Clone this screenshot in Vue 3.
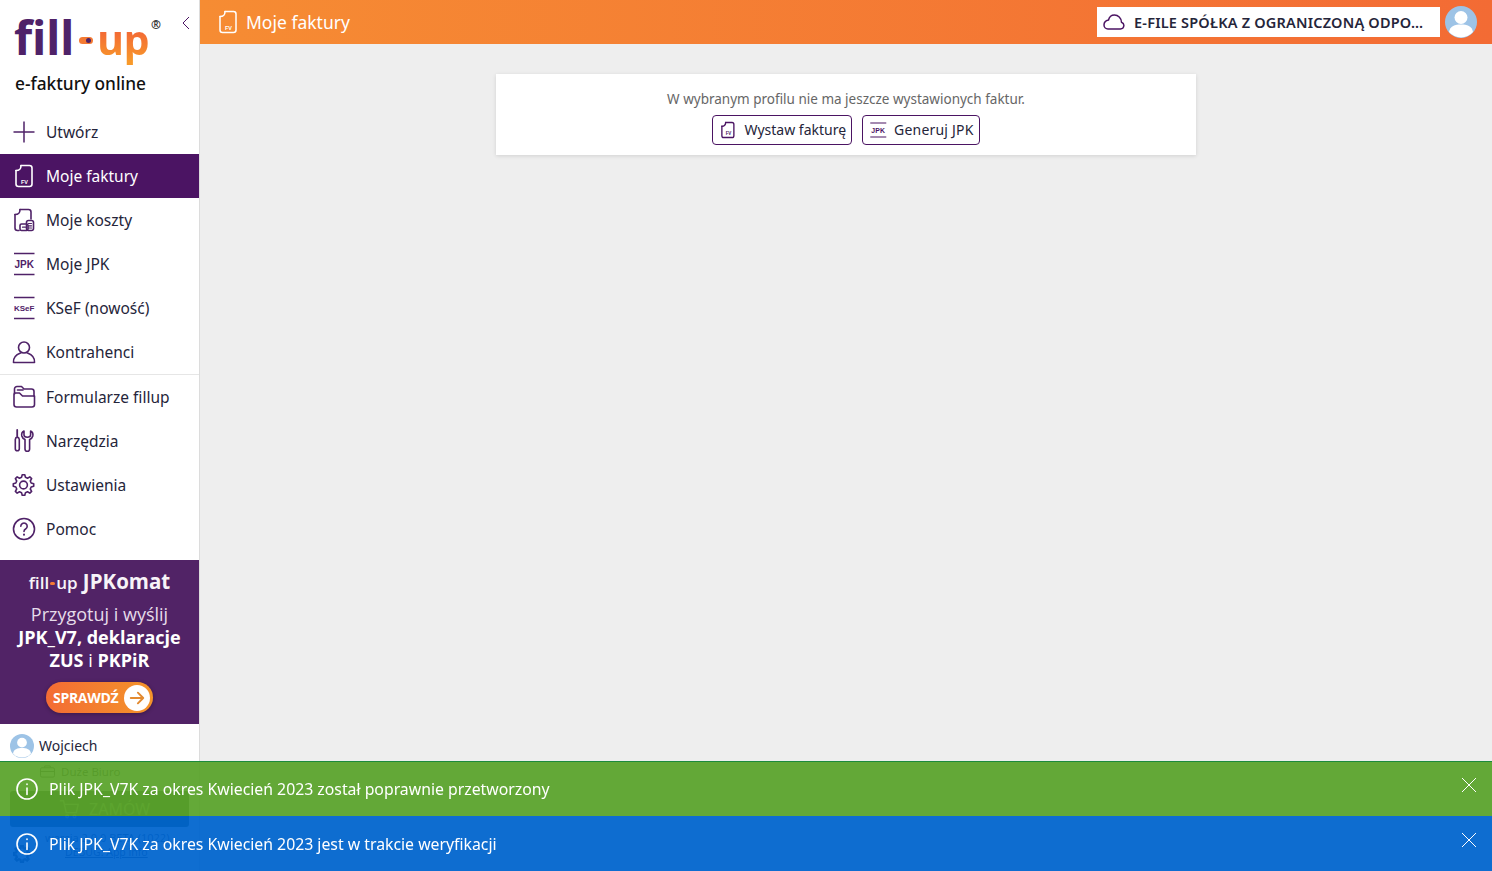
<script setup>
const navTop = [
  { label: 'Utwórz', icon: 'plus' },
  { label: 'Moje faktury', icon: 'doc', active: true },
  { label: 'Moje koszty', icon: 'cost' },
  { label: 'Moje JPK', icon: 'jpk' },
  { label: 'KSeF (nowość)', icon: 'ksef' },
  { label: 'Kontrahenci', icon: 'user' },
]
const navBottom = [
  { label: 'Formularze fillup', icon: 'folder' },
  { label: 'Narzędzia', icon: 'tools' },
  { label: 'Ustawienia', icon: 'gear' },
  { label: 'Pomoc', icon: 'help' },
]
const notices = [
  { text: 'Plik JPK_V7K za okres Kwiecień 2023 został poprawnie przetworzony', kind: 'green' },
  { text: 'Plik JPK_V7K za okres Kwiecień 2023 jest w trakcie weryfikacji', kind: 'blue' },
]

function gearPath(cx, cy, outer, inner, teeth) {
  const pts = []
  const step = (Math.PI * 2) / teeth
  for (let i = 0; i < teeth; i++) {
    const a = i * step - Math.PI / 2
    const spots = [
      [inner, a - step * 0.32],
      [outer, a - step * 0.16],
      [outer, a + step * 0.16],
      [inner, a + step * 0.32],
    ]
    for (const [r, t] of spots) {
      pts.push(`${(cx + r * Math.cos(t)).toFixed(2)} ${(cy + r * Math.sin(t)).toFixed(2)}`)
    }
  }
  return 'M' + pts.join('L') + 'Z'
}
const gear = gearPath(11.5, 12, 10.3, 7.9, 8)
const smallGear = gearPath(12, 12, 11, 8, 8)
</script>

<template>
  <div class="app">
    <aside class="sidebar">
      <div class="brand">
        <div class="logo">
          <span class="logo-fill">fill</span>
          <span class="logo-dash"><i></i></span>
          <span class="logo-up">up</span>
          <span class="logo-reg">®</span>
        </div>
        <svg class="collapse" width="8" height="14" viewBox="0 0 8 14"><path d="M7 1 1 7l6 6" fill="none" stroke="#4b1463" stroke-width="1"/></svg>
        <div class="tagline">e-faktury online</div>
      </div>

      <nav class="nav nav-top">
        <a v-for="item in navTop" :key="item.label" class="nav-item" :class="{ active: item.active }">
          <span class="nav-icon">
            <svg width="24" height="24" viewBox="0 0 24 24" fill="none" stroke="currentColor" stroke-width="1.6" stroke-linecap="round" stroke-linejoin="round">
              <template v-if="item.icon === 'plus'">
                <path d="M12 1.500v21M1.500 12h21" stroke-linecap="butt" stroke-width="1.500"/>
              </template>
              <template v-else-if="item.icon === 'doc'">
                <path d="M9 1.500h8.500A2.500 2.500 0 0 1 20 4v16a2.500 2.500 0 0 1-2.500 2.500h-11A2.500 2.500 0 0 1 4 20V6.500"/>
                <path d="M4 6.500c2.800 0 5-.5 5-5"/>
                <text x="9" y="19.500" class="mini" font-size="5.500" fill="currentColor" stroke="none">FV</text>
              </template>
              <template v-else-if="item.icon === 'cost'">
                <path d="M8 1.500h8.500A2.500 2.500 0 0 1 19 4v7"/>
                <path d="M3 6.500v13.500a2.500 2.500 0 0 0 2.500 2.500H7"/>
                <path d="M3 6.500c2.800 0 5-.5 5-5"/>
                <rect x="8" y="16" width="8" height="6.500" rx="1.500"/>
                <rect x="14.500" y="12.500" width="7" height="10" rx="2"/>
                <path d="M10.500 19.200h3M16.500 15.500h3M16.500 17.800h3M16.500 20h3" stroke-width="1.200"/>
              </template>
              <template v-else-if="item.icon === 'jpk' || item.icon === 'ksef'">
                <path d="M2 1.500h20.500M2 22.500h20.500" stroke-linecap="butt" stroke-width="1.400"/>
                <text x="12.200" :y="item.icon === 'jpk' ? 15.500 : 15" text-anchor="middle" class="mini" :font-size="item.icon === 'jpk' ? 10 : 8" fill="currentColor" stroke="none">{{ item.icon === 'jpk' ? 'JPK' : 'KSeF' }}</text>
              </template>
              <template v-else>
                <circle cx="12" cy="7.500" r="5.500"/>
                <path d="M1.500 22.500c-.5-5.500 3-8 7-9.500M22.500 22.500c.5-5.500-3-8-7-9.500M1.500 22.500h21"/>
              </template>
            </svg>
          </span>
          <span class="nav-label">{{ item.label }}</span>
        </a>
      </nav>

      <nav class="nav nav-bottom">
        <a v-for="item in navBottom" :key="item.label" class="nav-item">
          <span class="nav-icon">
            <svg width="24" height="24" viewBox="0 0 24 24" fill="none" stroke="currentColor" stroke-width="1.600" stroke-linecap="round" stroke-linejoin="round">
              <template v-if="item.icon === 'folder'">
                <path d="M2.500 9V4A2.500 2.500 0 0 1 5 1.500h4.500L12 4h7.500A2.500 2.500 0 0 1 22 6.500V11"/>
                <path d="M2 9.500c0-1 .8-1.500 1.500-1.500h4l3 3H22.500v8.500A2.500 2.500 0 0 1 20 22H4.500A2.500 2.500 0 0 1 2 19.500z"/>
                <path d="M5.500 5h5.500"/>
              </template>
              <template v-else-if="item.icon === 'tools'">
                <path d="M5.200 1v6.500" stroke-width="1.800"/>
                <path d="M4 8.500h2.500l.8 2v9.300a2 2 0 0 1-4 0V10.500z"/>
                <path d="M12 2C10 3 9.400 5 9.800 7c.4 1.600 1.700 2.800 3.200 3.400V20a2.300 2.300 0 0 0 4.600 0v-9.600c1.500-.6 2.800-1.800 3.200-3.400.4-2-.2-4-2.200-5v4a3.300 2.200 0 0 1-6.600 0z"/>
              </template>
              <template v-else-if="item.icon === 'gear'">
                <path :d="gear"/>
                <circle cx="11.500" cy="12" r="3.900"/>
              </template>
              <template v-else>
                <circle cx="12" cy="12" r="10.500"/>
                <path d="M8.800 9.200a3.200 3.200 0 1 1 4.800 2.800c-1 .6-1.600 1.200-1.600 2.400"/>
                <path d="M12 17.600v.2" stroke-width="2"/>
              </template>
            </svg>
          </span>
          <span class="nav-label">{{ item.label }}</span>
        </a>
      </nav>

      <section class="promo">
        <div class="promo-title"><span class="promo-brand">fill<i></i>up</span> JPKomat</div>
        <div class="promo-line light">Przygotuj i wyślij</div>
        <div class="promo-line">JPK_V7, deklaracje</div>
        <div class="promo-line">ZUS <span class="thin">i</span> PKPiR</div>
        <div class="promo-btn">
          <span>SPRAWDŹ</span>
          <span class="promo-arrow">
            <svg width="16" height="16" viewBox="0 0 18 18" fill="none" stroke="#e38a30" stroke-width="2.200" stroke-linecap="round" stroke-linejoin="round"><path d="M2 9h14M10 3l6 6-6 6"/></svg>
          </span>
        </div>
      </section>

      <div class="account">
        <svg class="avatar" width="24" height="24" viewBox="0 0 32 32">
          <circle cx="16" cy="16" r="16" fill="#9dc3e6"/>
          <circle cx="16" cy="11.500" r="6.500" fill="#fff"/>
          <path d="M4 26c1-6 6-7.500 12-7.500S27 20 28 26a16 16 0 0 1-24 0z" fill="#fff"/>
        </svg>
        <span>Wojciech</span>
      </div>
      <div class="plan">
        <svg width="15" height="13" viewBox="0 0 16 14" fill="none" stroke="#222" stroke-width="1"><rect x=".5" y="3" width="15" height="10" rx="1.500"/><path d="M5 3V1h6v2M.5 7h15"/></svg>
        <span>Duże Biuro</span>
      </div>
      <div class="order">
        <svg width="22" height="22" viewBox="0 0 24 24" fill="none" stroke="#7faf60" stroke-width="1.500"><path d="M2 3h4l3 13h11l2-9H7"/><circle cx="10" cy="20" r="1.500"/><circle cx="18" cy="20" r="1.500"/></svg>
        <span>ZAMÓW</span>
      </div>
      <div class="version">wersja 2.0.0 BETA (1022)</div>
      <div class="debug-row">
        <svg width="18" height="18" viewBox="0 0 24 24" fill="none" stroke="#123" stroke-width="3"><path :d="smallGear"/></svg>
        <span class="debug">DEBUG: App info</span>
      </div>
    </aside>

    <div class="content">
      <header class="topbar">
        <div class="page-title">
          <svg width="24" height="24" viewBox="0 0 24 24" fill="none" stroke="#fff" stroke-width="1.500" stroke-linecap="round" stroke-linejoin="round">
            <path d="M9 1.500h8.500A2.500 2.500 0 0 1 20 4v16a2.500 2.500 0 0 1-2.500 2.500h-11A2.500 2.500 0 0 1 4 20V6.500"/>
            <path d="M4 6.500c2.800 0 5-.5 5-5"/>
            <text x="9" y="19.500" class="mini" font-size="5.500" fill="#fff" stroke="none">FV</text>
          </svg>
          <span>Moje faktury</span>
        </div>
        <div class="company">
          <svg width="22" height="16" viewBox="0 0 22 16" fill="none" stroke="#4b1463" stroke-width="1.500" stroke-linejoin="round"><path d="M5 15h12.500a3.500 3.500 0 0 0 1-6.800C18.300 4 15 1 11.500 1 8.500 1 6.200 3 5.500 6 3 6.500 1 8.500 1 11c0 2.200 1.700 4 4 4z"/></svg>
          <span class="company-name">E-FILE SPÓŁKA Z OGRANICZONĄ ODPO…</span>
        </div>
        <svg class="top-avatar" width="32" height="32" viewBox="0 0 32 32">
          <circle cx="16" cy="16" r="16" fill="#9dc3e6"/>
          <circle cx="16" cy="11.500" r="6.500" fill="#fff"/>
          <path d="M4 26c1-6 6-7.500 12-7.500S27 20 28 26a16 16 0 0 1-24 0z" fill="#fff"/>
        </svg>
      </header>

      <main class="main">
        <section class="card">
          <p class="empty">W wybranym profilu nie ma jeszcze wystawionych faktur.</p>
          <div class="actions">
            <button class="btn">
              <svg width="18" height="18" viewBox="2 0 24 24" fill="none" stroke="#4b1463" stroke-width="1.800" stroke-linecap="round" stroke-linejoin="round">
                <path d="M9.500 2H18a2.500 2.500 0 0 1 2.500 2.500v15A2.500 2.500 0 0 1 18 22H7a2.500 2.500 0 0 1-2.500-2.500V7"/>
                <path d="M4.500 7c2.800 0 5-.5 5-5"/>
                <text x="9.500" y="19" class="mini" font-size="6" fill="#4b1463" stroke="none">FV</text>
              </svg>
              <span>Wystaw fakturę</span>
            </button>
            <button class="btn btn-wide">
              <svg width="18" height="16" viewBox="1 0 24 22" fill="none" stroke="#4b1463" stroke-width="1.400">
                <path d="M1 1.500h22M1 20.500h22"/>
                <text x="12" y="14.500" text-anchor="middle" class="mini" font-size="9.500" fill="#4b1463" stroke="none">JPK</text>
              </svg>
              <span>Generuj JPK</span>
            </button>
          </div>
        </section>
      </main>
    </div>

    <div class="notices">
      <div v-for="n in notices" :key="n.kind" class="notice" :class="n.kind">
        <svg width="22" height="22" viewBox="0 0 22 22" fill="none" stroke="#fff" stroke-width="1.600" stroke-linecap="round">
          <circle cx="11" cy="11" r="10"/>
          <path d="M11 10v6.500M11 6v.4"/>
        </svg>
        <span class="notice-text">{{ n.text }}</span>
        <svg class="notice-close" width="16" height="16" viewBox="0 0 16 16" stroke="#fff" stroke-width="1"><path d="M1 1l14 14M15 1 1 15"/></svg>
      </div>
    </div>
  </div>
</template>

<style scoped>
.app {
  display: flex;
  height: 100vh;
  overflow: hidden;
  font-family: "Noto Sans", "Open Sans", sans-serif;
  background: #eeeeee;
}
.sidebar {
  width: 200px;
  flex: none;
  box-sizing: border-box;
  background: #fff;
  border-right: 1px solid #dcdcdc;
  color: #25253a;
  overflow: hidden;
}
.brand {
  position: relative;
  height: 110px;
  box-sizing: border-box;
  padding: 8px 0 0 15px;
}
.logo {
  position: relative;
  display: flex;
  height: 58px;
  margin-left: -1px;
  align-items: baseline;
  font-weight: 700;
  line-height: 58px;
}
.logo-fill {
  color: #4f2268;
  font-size: 47px;
}
.logo-up {
  background: linear-gradient(0deg, #f89a2a 10%, #f36c34 60%);
  -webkit-background-clip: text;
  background-clip: text;
  color: transparent;
  font-size: 41px;
}
.logo-dash {
  position: relative;
  top: -11px;
  display: block;
  width: 14px;
  height: 7px;
  margin: 0 4px 0 5px;
  border-radius: 4px;
  background: #f47a33;
}
.logo-dash i {
  position: absolute;
  left: 7px;
  top: 1px;
  width: 5px;
  height: 5px;
  border-radius: 50%;
  background: #4f2268;
}
.logo-reg {
  position: absolute;
  left: 137px;
  top: -12px;
  font-size: 12px;
  font-weight: 700;
  color: #333;
}
.collapse {
  position: absolute;
  left: 182px;
  top: 16px;
}
.tagline {
  margin-top: 8px;
  font-size: 17.300px;
  font-weight: 500;
  line-height: 20px;
  color: #111;
}
.nav { display: flex; flex-direction: column; }
.nav-top { border-bottom: 1px solid #e6e6e6; }
.nav-bottom { margin-bottom: 9px; }
.nav-item {
  display: flex;
  align-items: center;
  height: 44px;
  padding-left: 12px;
  font-size: 15.500px;
  color: #25253a;
}
.nav-item.active {
  background: #4b1463;
  color: #fff;
}
.nav-icon {
  display: flex;
  width: 24px;
  height: 24px;
  margin-right: 10px;
  color: #4f2268;
}
.active .nav-icon { color: #fff; }
.mini {
  font-family: "Liberation Sans", sans-serif;
  font-weight: 700;
}
.promo {
  height: 164px;
  box-sizing: border-box;
  padding-top: 8px;
  background: #512366;
  color: #fff;
  text-align: center;
  font-family: "Open Sans", sans-serif;
}
.promo-title {
  height: 26px;
  line-height: 26px;
  font-size: 20.500px;
  font-weight: 700;
  color: #f7f3f8;
}
.promo-brand { font-size: 17px; font-weight: 600; }
.promo-brand i {
  display: inline-block;
  width: 5px;
  height: 3px;
  margin: 0 1px 4px;
  background: #f47a33;
  border-radius: 2px;
}
.promo-line {
  height: 23px;
  line-height: 23px;
  font-size: 18px;
  font-weight: 700;
}
.promo-line.light {
  margin-top: 9px;
  font-weight: 400;
  color: #e6dcea;
}
.thin { font-weight: 400; }
.promo-btn {
  display: flex;
  align-items: center;
  justify-content: space-between;
  box-sizing: border-box;
  width: 107px;
  height: 31px;
  margin: 10px auto 0 46px;
  padding: 0 3px 0 7px;
  border-radius: 16px;
  background: linear-gradient(90deg, #f36c34, #f4942a);
  box-shadow: 0 1px 4px rgba(0, 0, 0, .3);
  font-size: 14px;
  font-weight: 700;
  letter-spacing: -.3px;
}
.promo-arrow {
  display: flex;
  align-items: center;
  justify-content: center;
  width: 26px;
  height: 26px;
  border-radius: 50%;
  background: #fff;
}
.account {
  display: flex;
  align-items: center;
  gap: 5px;
  height: 44px;
  padding-left: 10px;
  margin-bottom: -9px;
  font-size: 14px;
  line-height: 18px;
}
.avatar { flex: none; }
.plan {
  display: flex;
  align-items: center;
  gap: 6px;
  height: 24px;
  padding-left: 40px;
  font-size: 11.500px;
  color: #222;
}
.order {
  display: flex;
  align-items: center;
  gap: 9px;
  box-sizing: border-box;
  width: 179px;
  height: 36px;
  margin: 8px 0 0 10px;
  padding-left: 48px;
  border-radius: 3px;
  background: #1a3a10;
  color: #7faf60;
  font-size: 16px;
}
.version {
  margin-top: 3px;
  padding-left: 45px;
  font-size: 11px;
  line-height: 15px;
  color: #10305c;
}
.debug-row {
  display: flex;
  align-items: flex-start;
  gap: 34px;
  padding-left: 13px;
}
.debug {
  font-size: 10.500px;
  line-height: 15px;
  color: #062a5e;
  text-decoration: underline;
}
.content {
  flex: 1;
  min-width: 0;
  display: flex;
  flex-direction: column;
}
.topbar {
  display: flex;
  align-items: center;
  flex: none;
  height: 44px;
  background: linear-gradient(90deg, #f68c33, #f36b34);
  color: #fff;
}
.page-title {
  display: flex;
  align-items: center;
  gap: 6px;
  flex: 1;
  padding-left: 16px;
  font-size: 17.500px;
}
.company {
  display: flex;
  align-items: center;
  gap: 9px;
  box-sizing: border-box;
  width: 343px;
  height: 30px;
  padding: 0 10px 0 6px;
  background: #fff;
  color: #25253a;
}
.company svg { flex: none; }
.company-name {
  white-space: nowrap;
  font-size: 14.500px;
  font-weight: 600;
  line-height: 18px;
  letter-spacing: .2px;
}
.top-avatar { margin: 0 15px 0 5px; }
.main {
  flex: 1;
  display: flex;
  justify-content: center;
  align-items: flex-start;
  padding-top: 30px;
}
.card {
  width: 700px;
  height: 81px;
  box-sizing: border-box;
  padding-top: 16px;
  background: #fff;
  text-align: center;
  box-shadow: 0 1px 4px rgba(0, 0, 0, .12);
}
.empty {
  margin: 0 0 6px;
  font-size: 13.500px;
  line-height: 19px;
  color: #666;
}
.actions {
  display: flex;
  justify-content: center;
  gap: 10px;
}
.btn {
  display: flex;
  align-items: center;
  gap: 6px;
  height: 30px;
  padding: 0 5px 2px 7px;
  background: #fff;
  border: 1px solid #4b1463;
  border-radius: 4px;
  color: #25253a;
  font-family: inherit;
  font-size: 14px;
}
.btn svg { position: relative; top: 1px; }
.btn-wide { letter-spacing: .2px; }
.notices {
  position: fixed;
  left: 0;
  right: 0;
  bottom: 0;
}
.notice {
  display: flex;
  align-items: center;
  box-sizing: border-box;
  height: 55px;
  padding: 0 15px 0 16px;
  color: #fff;
  font-size: 15.800px;
}
.notice.green {
  background: rgba(90, 164, 44, .94);
  border-top: 1px solid #1c8a3c;
}
.notice.blue { background: rgba(0, 101, 206, .94); }
.notice-text { margin-left: 11px; flex: 1; }
.notice-close { margin-bottom: 8px; }
</style>

<style>
body { margin: 0; }
</style>
